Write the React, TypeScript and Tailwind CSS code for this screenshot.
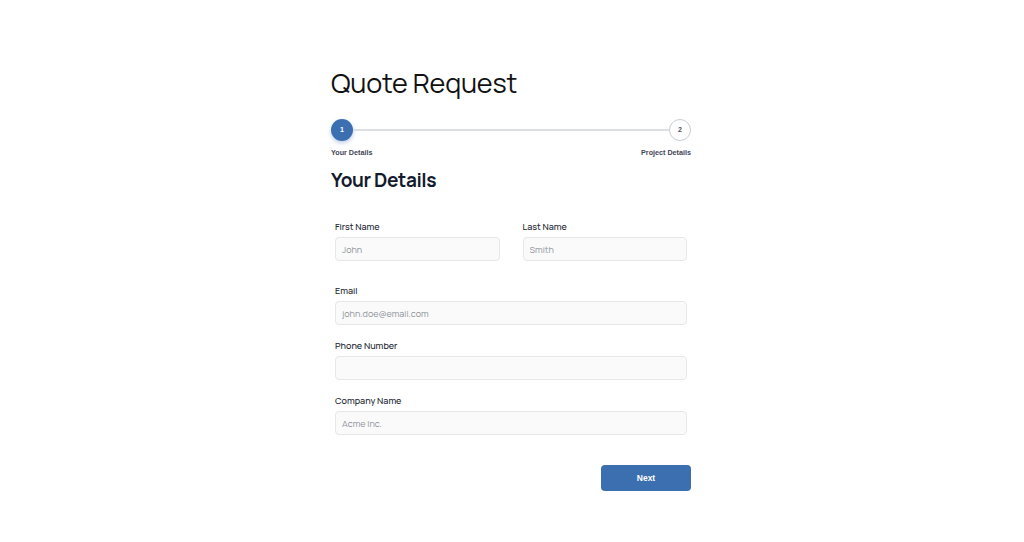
import React from "react";

const sans = "font-['Manrope','Inter','Noto_Sans',sans-serif]";
const arial = "font-['Liberation_Sans','Arial',sans-serif]";

function Field({ label, placeholder, type = "text" }: { label: string; placeholder?: string; type?: string }) {
    return (
        <label className="flex flex-col">
            <span className="text-[9px] leading-[14px] font-medium text-[#222631]">{label}</span>
            <input
                type={type}
                placeholder={placeholder}
                className="mt-[3px] h-[24px] w-full rounded-[4px] border border-[#e5e7eb] bg-[#fafafa] px-[6px] text-[9px] text-[#1f2937] placeholder:text-[#8e939b] outline-none"
            />
        </label>
    );
}

export default function App() {
    return (
        <div className={`flex min-h-[542px] w-full justify-center bg-white pr-[2px] ${sans}`}>
            <div className="w-[360px] pt-[66px]">
                <h1 className="text-[27px] leading-[34px] font-normal tracking-[-0.2px] text-[#111111]">Quote Request</h1>

                <div className="mt-[19px] flex items-center">
                    <div className="flex h-[22px] w-[22px] shrink-0 items-center justify-center rounded-full bg-[#3b6fb2] shadow-[0_2px_4px_rgba(59,111,178,0.35)]">
                        <span className={`text-[7px] font-bold text-white ${arial}`}>1</span>
                    </div>
                    <div className="h-[2px] flex-1 bg-[#dcdfe4]" />
                    <div className="flex h-[22px] w-[22px] shrink-0 items-center justify-center rounded-full border border-[#c8ccd2] bg-white">
                        <span className={`text-[7px] font-bold text-[#4b5563] ${arial}`}>2</span>
                    </div>
                </div>
                <div className={`mt-[6px] flex justify-between text-[7.2px] leading-[12px] font-bold text-[#3f4654] ${arial}`}>
                    <span>Your Details</span>
                    <span>Project Details</span>
                </div>

                <h2 className="mt-[7px] text-[19px] leading-[28px] font-bold tracking-[-0.4px] text-[#141b2d]">Your Details</h2>

                <form className="mt-[26px]">
                    <div className="px-[4px]">
                        <div className="grid grid-cols-2 gap-[23px]">
                            <Field label="First Name" placeholder="John" />
                            <Field label="Last Name" placeholder="Smith" />
                        </div>
                        <div className="mt-[23px] flex flex-col gap-[14px]">
                            <Field label="Email" placeholder="john.doe@email.com" type="email" />
                            <Field label="Phone Number" type="tel" />
                            <Field label="Company Name" placeholder="Acme Inc." />
                        </div>
                    </div>
                    <div className="mt-[30px] flex justify-end">
                        <button
                            type="button"
                            className={`h-[26px] w-[90px] rounded-[4px] bg-[#3b6fb0] text-[8.5px] font-bold text-white ${arial}`}
                        >
                            Next
                        </button>
                    </div>
                </form>
            </div>
        </div>
    );
}
